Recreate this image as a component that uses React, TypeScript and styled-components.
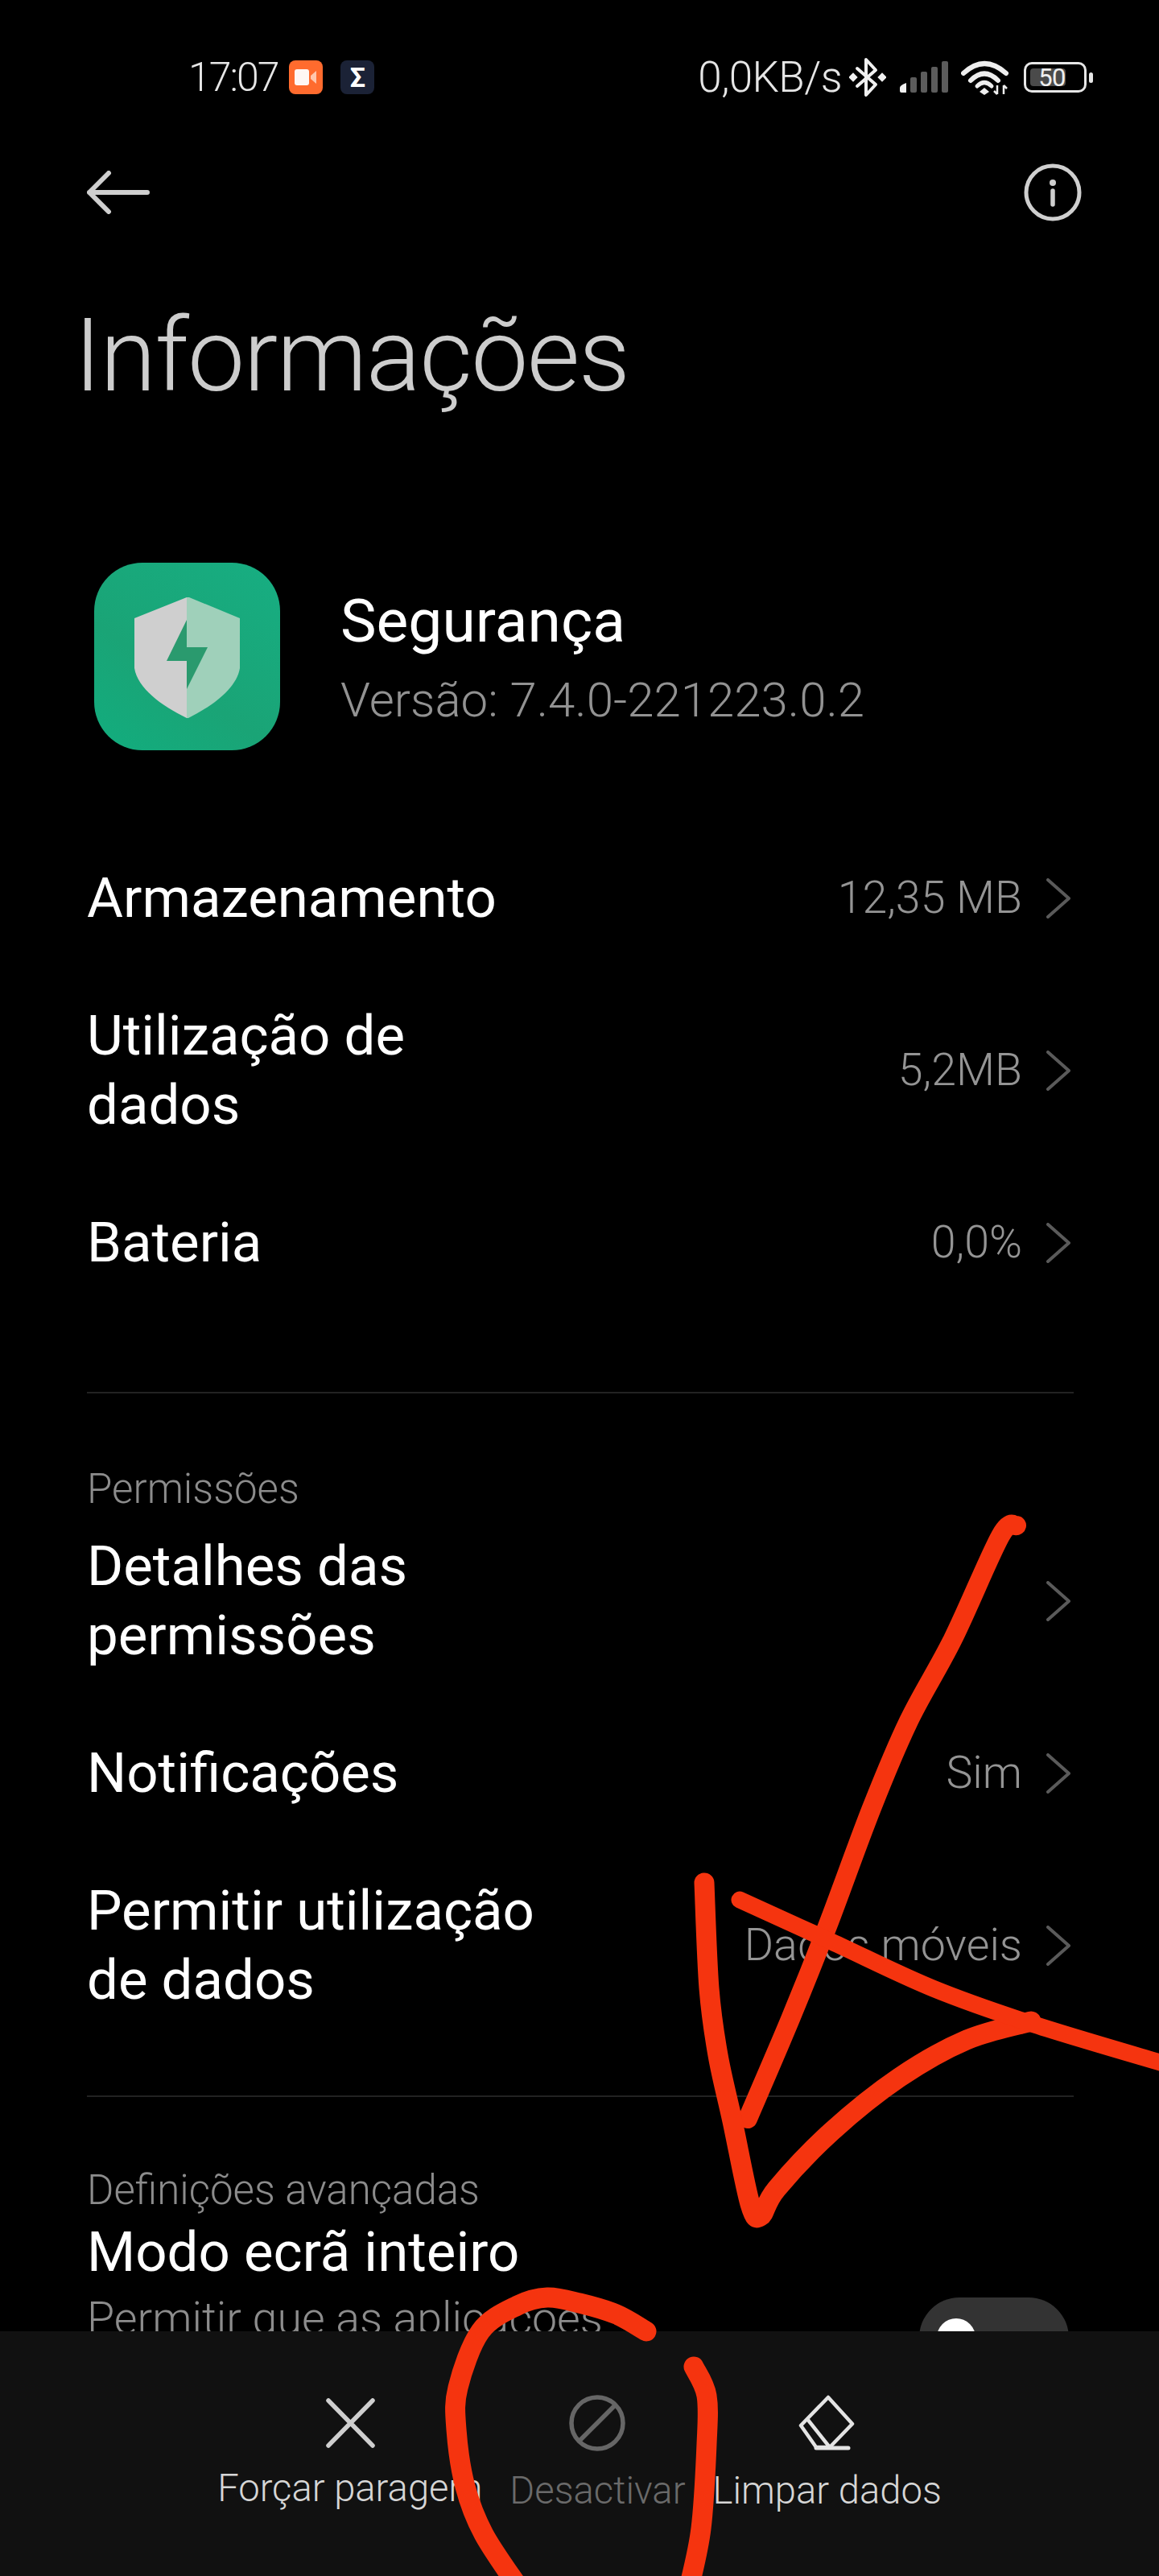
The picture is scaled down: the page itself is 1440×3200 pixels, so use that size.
import React from "react";
import styled, { createGlobalStyle } from "styled-components";

const FONT = `"Roboto", "Noto Sans", "Liberation Sans", sans-serif`;

const GlobalStyle = createGlobalStyle`
  html, body {
    margin: 0;
    padding: 0;
    background: #000;
  }
`;

const Screen = styled.div`
  position: relative;
  width: 1440px;
  height: 3200px;
  display: flex;
  flex-direction: column;
  overflow: hidden;
  background: #000;
  font-family: ${FONT};
`;

const Content = styled.main`
  flex: 1;
  min-height: 0;
  overflow: hidden;
`;

const StatusBar = styled.div`
  height: 72px;
  margin-top: 60px;
  padding: 0 90px 0 234px;
  display: flex;
  align-items: center;
  justify-content: space-between;
  color: #e6e6e6;
`;

const StatusGroup = styled.div`
  display: flex;
  align-items: center;
`;

const Time = styled.span`
  font-size: 50px;
  font-weight: 300;
  letter-spacing: -2px;
  margin-right: 14px;
`;

const NotifBadge = styled.span<{ $bg: string; $gap?: number }>`
  width: 42px;
  height: 42px;
  margin-right: ${(p) => p.$gap ?? 0}px;
  border-radius: 8px;
  background: ${(p) => p.$bg};
  display: flex;
  align-items: center;
  justify-content: center;
  color: #fff;
  font-size: 34px;
  font-weight: 700;
  line-height: 1;
`;

const Speed = styled.span`
  font-size: 53px;
  font-weight: 300;
  letter-spacing: -0.6px;
  margin-right: 9px;
`;

const StatusIcon = styled.svg<{ $gap?: number }>`
  display: block;
  margin-right: ${(p) => p.$gap ?? 0}px;
`;

const Battery = styled.div`
  position: relative;
  width: 78px;
  height: 38px;
  box-sizing: border-box;
  border: 3px solid #e6e6e6;
  border-radius: 10px;
  margin-left: 18px;
  padding: 5px;
  display: flex;

  &::after {
    content: "";
    position: absolute;
    right: -11px;
    top: 10px;
    width: 5px;
    height: 13px;
    border-radius: 3px;
    background: #e6e6e6;
  }
`;

const BatteryFill = styled.div`
  width: 44px;
  height: 100%;
  border-radius: 4px;
  background: #4a4a4a;
  display: flex;
  align-items: center;
  justify-content: flex-end;
  font-size: 31px;
  line-height: 1;
  color: #eee;
  letter-spacing: -0.5px;
  white-space: nowrap;
`;

const NavBar = styled.div`
  height: 72px;
  margin-top: 71px;
  padding: 0 96px 0 108px;
  display: flex;
  align-items: center;
  justify-content: space-between;
`;

const Title = styled.h1`
  margin: 97px 0 0 92px;
  font-size: 127px;
  line-height: 140px;
  font-weight: 300;
  color: #cdcdcd;
  letter-spacing: -1.6px;
`;

const AppHeader = styled.section`
  margin-top: 187px;
  padding-left: 117px;
  height: 233px;
  display: flex;
  align-items: center;
  gap: 75px;
`;

const AppIcon = styled.div`
  width: 231px;
  height: 233px;
  border-radius: 60px;
  background: linear-gradient(215deg, #17ae82 0%, #1aa476 60%, #12ad7e 100%);
`;

const AppText = styled.div`
  padding-top: 8px;
  display: flex;
  flex-direction: column;
  gap: 28px;
`;

const AppName = styled.div`
  font-size: 75px;
  line-height: 72px;
  color: #fff;
`;

const AppVersion = styled.div`
  font-size: 60px;
  line-height: 70px;
  font-weight: 300;
  color: #929292;
`;

const List = styled.section<{ $top: number }>`
  margin-top: ${(p) => p.$top}px;
`;

const Row = styled.div`
  box-sizing: border-box;
  padding: 42.5px 110px 42.5px 108px;
  display: flex;
  align-items: center;
  justify-content: space-between;
`;

const RowTitle = styled.div<{ $width?: number }>`
  width: ${(p) => (p.$width ? `${p.$width}px` : "auto")};
  font-size: 69px;
  line-height: 86px;
  color: #fff;
`;

const RowSide = styled.div`
  display: flex;
  align-items: center;
  gap: 30px;
`;

const RowValue = styled.span`
  font-size: 55.5px;
  font-weight: 300;
  color: #949494;
  white-space: nowrap;
`;

const Divider = styled.hr<{ $top: number }>`
  margin: ${(p) => p.$top}px 106px 0 108px;
  border: 0;
  height: 2px;
  background: #222;
`;

const SectionLabel = styled.div<{ $top: number }>`
  margin: ${(p) => p.$top}px 0 0 108px;
  font-size: 51px;
  line-height: 21px;
  font-weight: 300;
  color: #8c8c8c;
`;

const ToggleRow = styled.div`
  margin-top: 24px;
  padding: 0 112px 0 108px;
  display: flex;
  align-items: flex-start;
  justify-content: space-between;
`;

const ToggleText = styled.div`
  display: flex;
  flex-direction: column;
  gap: 10px;
`;

const Desc = styled.div`
  font-size: 55.5px;
  line-height: 60px;
  font-weight: 300;
  color: #8c8c8c;
`;

const Toggle = styled.div`
  margin-top: 99px;
  width: 186px;
  height: 100px;
  box-sizing: border-box;
  padding: 26px 22px;
  border-radius: 50px;
  background: #333;
`;

const Knob = styled.div`
  width: 48px;
  height: 48px;
  border-radius: 50%;
  background: #fff;
`;

const Footer = styled.footer`
  height: 304px;
  flex: none;
  background: #111;
  display: flex;
  justify-content: center;
  gap: 34px;
`;

const Action = styled.div`
  padding-top: 78px;
  display: flex;
  flex-direction: column;
  align-items: center;
`;

const ActionIcon = styled.svg`
  display: block;
`;

const ActionLabel = styled.span<{ $muted?: boolean; $raise?: number }>`
  margin-top: ${(p) => 16 - (p.$raise ?? 0)}px;
  font-size: 47.2px;
  line-height: 64px;
  font-weight: 300;
  white-space: nowrap;
  color: ${(p) => (p.$muted ? "#6a6a6a" : "#d6d6d6")};
`;

const Scribble = styled.svg`
  position: absolute;
  left: 0;
  top: 0;
  pointer-events: none;
`;

// catmull-rom through the sampled pen points, so the strokes stay smooth
const smooth = (pts: number[][]) => {
  let d = `M${pts[0][0]} ${pts[0][1]}`;
  for (let i = 0; i < pts.length - 1; i++) {
    const p0 = pts[i - 1] ?? pts[i];
    const p1 = pts[i];
    const p2 = pts[i + 1];
    const p3 = pts[i + 2] ?? p2;
    const c1x = p1[0] + (p2[0] - p0[0]) / 6;
    const c1y = p1[1] + (p2[1] - p0[1]) / 6;
    const c2x = p2[0] - (p3[0] - p1[0]) / 6;
    const c2y = p2[1] - (p3[1] - p1[1]) / 6;
    d += ` C${c1x} ${c1y} ${c2x} ${c2y} ${p2[0]} ${p2[1]}`;
  }
  return d;
};

const STROKES: { width: number; pts: number[][] }[] = [
  {
    width: 24,
    pts: [[1263, 1895], [1243, 1908], [1184, 2036], [1129, 2138], [1083, 2246], [1028, 2393], [982, 2508], [929, 2632]],
  },
  {
    width: 25,
    pts: [[875, 2339], [881, 2470], [892, 2553], [910, 2635], [932, 2738], [945, 2753], [965, 2719], [1033, 2648], [1117, 2581], [1201, 2534], [1281, 2511]],
  },
  {
    width: 21,
    pts: [[919, 2360], [1033, 2412], [1159, 2470], [1285, 2515], [1448, 2564]],
  },
  {
    width: 25,
    pts: [[803, 2896], [766, 2875], [720, 2861], [680, 2854], [643, 2864], [597, 2896], [569, 2966], [567, 3018], [578, 3089], [601, 3148], [645, 3215]],
  },
  {
    width: 25,
    pts: [[862, 2940], [878, 2976], [878, 3036], [871, 3141], [856, 3215]],
  },
];

const Chevron = () => (
  <svg width="30" height="50" viewBox="0 0 30 50" fill="none">
    <path d="M2 2 L28 25 L2 48" stroke="#5a5a5a" strokeWidth="4" strokeLinecap="round" strokeLinejoin="round" />
  </svg>
);

const ShieldIcon = () => (
  <svg width="231" height="233" viewBox="0 0 231 233" style={{ display: "block" }}>
    <path d="M115 43 L50 69 L50 131 C54 156 84 178 115 193 Z" fill="#cfcfcf" />
    <path d="M115 43 C116 43 117 43 118 43 L181 69 L181 131 C177 156 147 178 117 193 L115 193 Z" fill="#9fd0ba" />
    <path d="M115 71 L90 122 L115 122 L115 157 L141 105 L115 105 Z" fill="#2a9a6e" />
  </svg>
);

const Row1 = ({ title, value, width }: { title: React.ReactNode; value?: string; width?: number }) => (
  <Row>
    <RowTitle $width={width}>{title}</RowTitle>
    <RowSide>
      {value && <RowValue>{value}</RowValue>}
      <Chevron />
    </RowSide>
  </Row>
);

const App = () => {
  return (
    <Screen>
      <GlobalStyle />
      <Content>
        <StatusBar>
          <StatusGroup>
            <Time>17:07</Time>
            <NotifBadge $bg="#ff6b2e" $gap={22}>
              <svg width="30" height="24" viewBox="0 0 30 24">
                <rect x="1" y="2" width="18" height="20" rx="3" fill="#fff" opacity="0.95" />
                <path d="M21 10 L28 4 V20 L21 14 Z" fill="#ffc6ac" />
              </svg>
            </NotifBadge>
            <NotifBadge $bg="#1b2236">Σ</NotifBadge>
          </StatusGroup>
          <StatusGroup>
            <Speed>0,0KB/s</Speed>
            <StatusIcon width="46" height="50" viewBox="0 0 46 50" fill="none" $gap={17}>
              <path d="M10 14 L33 34 L21 47 V3 L33 16 L10 36" stroke="#f0f0f0" strokeWidth="4" strokeLinejoin="round" strokeLinecap="round" />
              <rect x="1" y="21" width="8" height="8" transform="rotate(45 5 25)" fill="#f0f0f0" />
              <rect x="37" y="21" width="8" height="8" transform="rotate(45 41 25)" fill="#f0f0f0" />
            </StatusIcon>
            <StatusIcon width="60" height="40" viewBox="0 0 60 40" $gap={16}>
              <path d="M0 33 Q0 30 8 27 V39 H2 Q0 39 0 37 Z" fill="#f0f0f0" />
              <rect x="13" y="20" width="8" height="19" rx="2" fill="#5c5c5c" />
              <rect x="26" y="13" width="8" height="26" rx="2" fill="#5c5c5c" />
              <rect x="39" y="7" width="8" height="32" rx="2" fill="#5c5c5c" />
              <rect x="52" y="0" width="8" height="39" rx="2" fill="#5c5c5c" />
            </StatusIcon>
            <StatusIcon width="60" height="44" viewBox="0 0 60 44" fill="none">
              <path d="M3 17 Q29 -7 56 17" stroke="#eee" strokeWidth="6" strokeLinecap="round" />
              <path d="M12 26 Q29 9 46 26" stroke="#eee" strokeWidth="6" strokeLinecap="round" />
              <path d="M20 33 Q29 24 38 33" stroke="#eee" strokeWidth="5" strokeLinecap="round" />
              <path d="M29 35 L35 40 L29 44 L23 40 Z" fill="#eee" />
              <path d="M45 32 V43 M41 39 L45 43 M53 43 V32 M53 32 L57 36" stroke="#eee" strokeWidth="2.5" />
            </StatusIcon>
            <Battery>
              <BatteryFill>50</BatteryFill>
            </Battery>
          </StatusGroup>
        </StatusBar>

        <NavBar>
          <svg width="78" height="54" viewBox="0 0 78 54" fill="none">
            <path d="M75 27 H3 M27 3 L3 27 L27 51" stroke="#cfcfcf" strokeWidth="6" strokeLinecap="round" strokeLinejoin="round" />
          </svg>
          <svg width="72" height="72" viewBox="0 0 72 72" fill="none">
            <circle cx="36" cy="36" r="33" stroke="#cfcfcf" strokeWidth="5" />
            <circle cx="36" cy="24" r="4" fill="#cfcfcf" />
            <path d="M36 34 V51" stroke="#cfcfcf" strokeWidth="5.5" strokeLinecap="round" />
          </svg>
        </NavBar>

        <Title>Informações</Title>

        <AppHeader>
          <AppIcon>
            <ShieldIcon />
          </AppIcon>
          <AppText>
            <AppName>Segurança</AppName>
            <AppVersion>Versão: 7.4.0-221223.0.2</AppVersion>
          </AppText>
        </AppHeader>

        <List $top={98}>
          <Row1 title="Armazenamento" value="12,35 MB" />
          <Row1 title="Utilização de dados" value="5,2MB" width={480} />
          <Row1 title="Bateria" value="0,0%" />
        </List>

        <Divider $top={100} />

        <SectionLabel $top={108}>Permissões</SectionLabel>
        <List $top={0}>
          <Row1 title="Detalhes das permissões" width={480} />
          <Row1 title="Notificações" value="Sim" />
          <Row1 title="Permitir utilização de dados" value="Dados móveis" width={580} />
        </List>

        <Divider $top={58} />

        <SectionLabel $top={105}>Definições avançadas</SectionLabel>
        <ToggleRow>
          <ToggleText>
            <RowTitle>Modo ecrã inteiro</RowTitle>
            <Desc>Permitir que as aplicações</Desc>
          </ToggleText>
          <Toggle>
            <Knob />
          </Toggle>
        </ToggleRow>
      </Content>

      <Footer>
        <Action>
          <ActionIcon width="72" height="72" viewBox="0 0 72 72" fill="none">
            <path d="M9 8 L64 64 M64 8 L9 64" stroke="#cfcfcf" strokeWidth="5.5" strokeLinecap="round" />
          </ActionIcon>
          <ActionLabel $raise={3}>Forçar paragem</ActionLabel>
        </Action>
        <Action>
          <ActionIcon width="72" height="72" viewBox="0 0 72 72" fill="none">
            <circle cx="36" cy="36" r="32" stroke="#666" strokeWidth="5.5" />
            <path d="M58 14 L14 58" stroke="#666" strokeWidth="5.5" strokeLinecap="round" />
          </ActionIcon>
          <ActionLabel $muted>Desactivar</ActionLabel>
        </Action>
        <Action>
          <ActionIcon width="72" height="72" viewBox="0 0 72 72" fill="none">
            <path d="M37 4 L67 37 L39 66 H22 L3 39 Z" stroke="#e4e4e4" strokeWidth="4.5" strokeLinejoin="round" />
            <path d="M11 31 L38 65" stroke="#e4e4e4" strokeWidth="4.5" />
            <path d="M22 67 H62" stroke="#e4e4e4" strokeWidth="5" strokeLinecap="round" />
          </ActionIcon>
          <ActionLabel>Limpar dados</ActionLabel>
        </Action>
      </Footer>

      <Scribble width="1440" height="3200" viewBox="0 0 1440 3200" fill="none">
        <g stroke="#f5340f" strokeLinecap="round" strokeLinejoin="round">
          {STROKES.map((s, i) => (
            <path key={i} strokeWidth={s.width} d={smooth(s.pts)} />
          ))}
        </g>
      </Scribble>
    </Screen>
  );
};

export default App;
